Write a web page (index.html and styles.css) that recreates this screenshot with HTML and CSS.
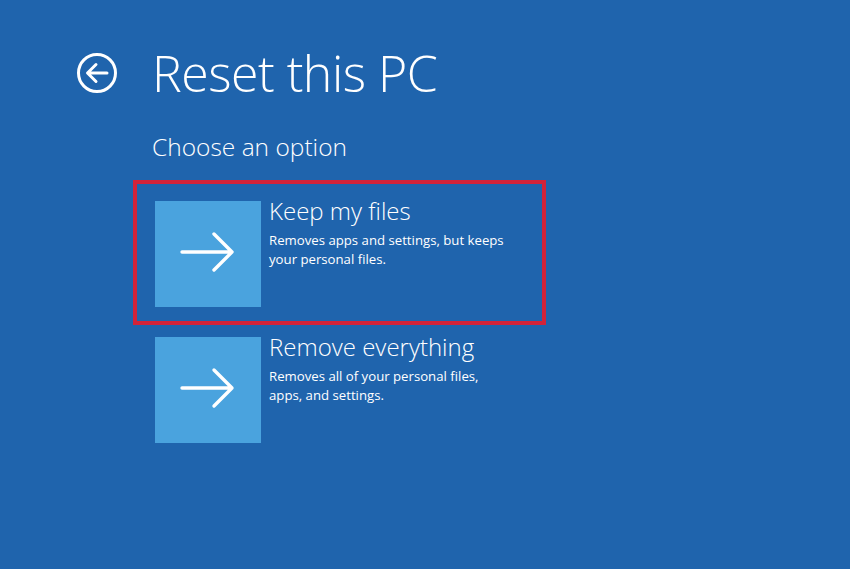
FILE: index.html
```html
<!DOCTYPE html>
<html lang="en">
<head>
<meta charset="utf-8">
<title>Reset this PC</title>
<link rel="stylesheet" href="styles.css">
</head>
<body>
<div class="page">
  <header class="header">
    <div class="back" aria-label="Back">
      <svg width="42" height="42" viewBox="0 0 42 42">
        <circle cx="21" cy="21" r="18.5" fill="none" stroke="#fff" stroke-width="3"/>
        <path d="M31 21H12 M20 12.5L11.5 21L20 29.5" fill="none" stroke="#fff" stroke-width="3" stroke-linecap="round" stroke-linejoin="round"/>
      </svg>
    </div>
    <h1 class="title">Reset this PC</h1>
  </header>
  <main class="content">
    <h2 class="subtitle">Choose an option</h2>
    <div class="options">
      <div class="option selected">
        <div class="tile">
          <svg width="106" height="106" viewBox="0 0 106 106">
            <path d="M27 51H77 M59 33L77 51L59 69" fill="none" stroke="#fff" stroke-width="3.4" stroke-linecap="round" stroke-linejoin="round"/>
          </svg>
        </div>
        <div class="text">
          <div class="opt-title">Keep my files</div>
          <div class="opt-desc">Removes apps and settings, but keeps<br>your personal files.</div>
        </div>
      </div>
      <div class="option">
        <div class="tile">
          <svg width="106" height="106" viewBox="0 0 106 106">
            <path d="M27 51H77 M59 33L77 51L59 69" fill="none" stroke="#fff" stroke-width="3.4" stroke-linecap="round" stroke-linejoin="round"/>
          </svg>
        </div>
        <div class="text">
          <div class="opt-title">Remove everything</div>
          <div class="opt-desc">Removes all of your personal files,<br>apps, and settings.</div>
        </div>
      </div>
    </div>
  </main>
</div>
</body>
</html>
```
FILE: styles.css
```css
html, body {
  margin: 0;
  padding: 0;
}
body {
  background: #1f64ad;
  color: #ffffff;
  font-family: "Open Sans", "Noto Sans", sans-serif;
  width: 850px;
  height: 569px;
  overflow: hidden;
}
.page {
  padding: 44px 0 0 76px;
}
.header {
  display: flex;
  align-items: center;
  gap: 34px;
  height: 58px;
}
.back {
  width: 42px;
  height: 42px;
}
.back svg {
  display: block;
}
.title {
  margin: 0;
  font-size: 50px;
  font-weight: 300;
  line-height: 58px;
  letter-spacing: -0.5px;
}
.content {
  padding-left: 76px;
  margin-top: 29px;
}
.subtitle {
  margin: 0;
  font-size: 24.5px;
  font-weight: 300;
  line-height: 32px;
}
.options {
  display: flex;
  flex-direction: column;
  gap: 30px;
  margin-top: 38px;
  padding-left: 3px;
}
.option {
  position: relative;
  display: flex;
  gap: 8px;
  width: 369px;
}
.option.selected::after {
  content: "";
  position: absolute;
  top: -21px;
  left: -22px;
  right: -22px;
  bottom: -18px;
  border: 4px solid #d2233a;
}
.tile {
  width: 106px;
  height: 106px;
  background: #4aa3de;
  flex: none;
}
.tile svg {
  display: block;
}
.opt-title {
  font-size: 24px;
  font-weight: 300;
  line-height: 26px;
  margin-top: -3px;
  white-space: nowrap;
}
.opt-desc {
  font-size: 13.2px;
  line-height: 18.5px;
  margin-top: 7px;
  white-space: nowrap;
}
```
